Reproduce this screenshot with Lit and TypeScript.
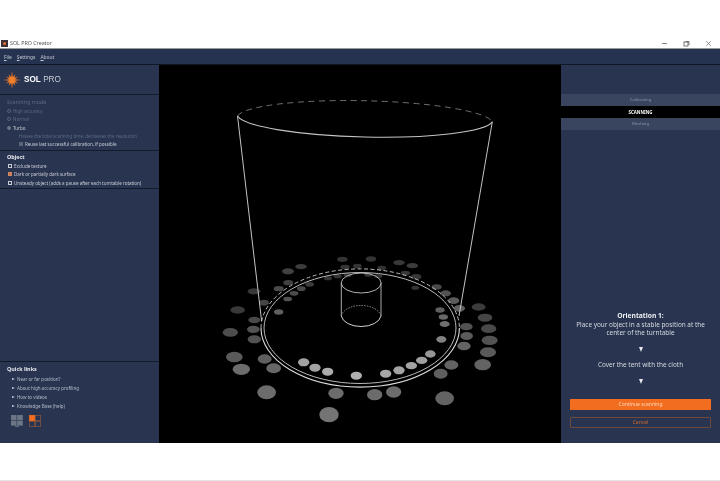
import { LitElement, html, css, svg } from "lit";
import { customElement } from "lit/decorators.js";

type Dot = [number, number, number, number, number];
const dots: Dot[] = [
  [397,28,16,8,60],[483,27,16,8,60],[567,38,17,8,65],[607,47,17,8,70],[405,51,14,7,60],[442,48,13,7,60],[515,54,13,7,60],
  [586,69,14,7,65],[619,80,15,8,65],[273,50,17,8,70],[234,64,18,9,75],[235,98,15,8,75],[299,103,13,7,70],[354,85,12,6,60],
  [383,79,12,6,60],[413,75,12,6,60],[475,74,12,6,60],[505,78,12,6,60],[206,116,15,8,85],[274,116,13,7,85],[252,130,13,7,90],
  [233,147,13,7,95],[132,124,19,9,65],[162,158,15,9,80],[83,180,22,11,65],[206,186,14,8,110],[133,210,18,10,85],[130,238,19,11,95],
  [61,247,23,13,90],[133,268,20,12,95],[73,321,25,16,105],[164,327,21,14,110],[94,358,26,17,125],[191,355,22,15,120],
  [281,337,17,12,190],[315,353,17,12,190],[353,365,17,12,200],[439,377,17,12,205],[527,371,17,12,195],[567,361,17,12,190],
  [604,347,17,11,190],[635,331,17,11,185],[661,312,16,11,175],[694,268,15,10,150],[704,222,15,9,130],[700,201,14,8,120],
  [690,180,14,8,110],[616,113,12,6,60],[680,111,15,8,85],[707,130,16,9,95],[731,152,17,10,105],[748,175,17,10,110],
  [806,171,21,11,70],[825,203,22,12,80],[836,236,23,13,85],[839,271,24,14,95],[834,307,24,15,105],[818,344,25,17,115],
  [769,230,19,11,95],[770,258,19,12,105],[762,288,20,13,115],[724,345,21,14,115],[692,371,21,15,110],
  [170,427,28,21,125],[378,430,23,17,125],[494,434,23,17,125],[551,426,23,17,125],[704,445,28,21,115],[357,494,29,23,135],
];

const scene = svg`
  ${dots.map(([x, y, rx, ry, g]) => {
    const v = Math.round(g * 0.86);
    return svg`<ellipse cx=${210 + x / 3} cy=${250 + y / 3} rx=${rx / 3} ry=${ry / 3} fill=${`rgb(${v},${v},${v})`}></ellipse>`;
  })}
  <g fill="none" stroke="#c4c4c4" stroke-width="1">
    <path d="M237.5 116 L261.6 321"/>
    <path d="M492.3 121.7 L459 316"/>
    <path d="M237.5 116 A128 20 1.3 0 0 492.3 121.7" stroke-width="1.1"/>
    <path d="M237.5 116 A128 20 1.3 0 1 492.3 121.7" stroke="#8c8c8c" stroke-width=".8" stroke-dasharray="6 4.5"/>
    <path d="M261 328 A99 59 0 0 0 459.4 328" stroke="#dcdcdc" stroke-width="1.1"/>
    <path d="M261 328 A99 59 0 0 1 459.4 328" stroke="#cfcfcf" stroke-width=".9" stroke-dasharray="4 2.5"/>
    <ellipse cx="360" cy="328" rx="96" ry="55.5" stroke="#b8b8b8" stroke-width="1"/>
    <path d="M341.3 283 L341.3 316 M381 283 L381 316" stroke="#bdbdbd" stroke-width=".9"/>
    <ellipse cx="361.2" cy="283" rx="20" ry="10" stroke="#c4c4c4" stroke-width=".9"/>
    <path d="M341.3 316 A20 12 0 0 0 381 316" stroke="#d0d0d0" stroke-width="1"/>
    <path d="M341.3 316 A20 12 0 0 1 381 316" stroke="#b0b0b0" stroke-width=".8" stroke-dasharray="1.5 1.2"/>
  </g>
`;

function starPoints(): string {
  const pts: string[] = [];
  const n = 12;
  for (let i = 0; i < n * 2; i++) {
    const a = (i * Math.PI) / n;
    let r = 3.1;
    if (i % 2 === 0) {
      const k = i / 2;
      r = k % 3 === 0 ? 9 : 7;
    }
    pts.push(`${(r * Math.cos(a)).toFixed(2)},${(r * Math.sin(a)).toFixed(2)}`);
  }
  return pts.join(" ");
}

@customElement("app-root")
export class AppRoot extends LitElement {
  static styles = css`
    :host {
      display: block;
      width: 720px;
      height: 481px;
      background: #fff;
      font-family: "Noto Sans", "Open Sans", sans-serif;
      overflow: hidden;
      filter: blur(0.3px);
    }
    .window { display: flex; flex-direction: column; height: 443px; padding-top: 38px; box-sizing: border-box; }
    .bottom { height: 38px; border-bottom: 1px solid #e4e4e4; box-sizing: border-box; }
    .title {
      height: 10px; display: flex; align-items: center; padding-left: 1px;
      font-size: 5.3px; color: #555; box-sizing: content-box; border-bottom: 1px solid #9a9a9a;
    }
    .app-icon { width: 7px; height: 7px; margin-right: 2px; background: #3a3238; display: flex; align-items: center; justify-content: center; }
    .app-icon i { width: 3px; height: 3px; background: #e8702a; border-radius: 50%; }
    .spacer { flex: 1; }
    .ctl { width: 22px; display: flex; justify-content: center; }
    .ctl.last { margin-right: 1px; }
    .menu {
      height: 15px; background: #253350; border-bottom: 1px solid #101622; display: flex; align-items: center;
      gap: 5px; padding: 0 4px; font-size: 4.9px; color: #c3c8d2;
    }
    .menu u { text-underline-offset: 1px; }
    .main { flex: 1; display: flex; min-height: 0; background: #000; }
    .left { width: 159px; background: #283450; display: flex; flex-direction: column; color: #c8ccd4; font-size: 4.5px; }
    .sec { border-bottom: 1px solid #131a29; box-sizing: border-box; padding-left: 7px; }
    .logo { height: 30px; display: flex; align-items: center; padding-left: 3px; gap: 3px; }
    .word { font-size: 8.2px; color: #fff; font-family: "Liberation Sans", sans-serif; }
    .word b { font-weight: 700; }
    .word span { font-weight: 400; color: #c7ccd6; }
    .mode { height: 56px; padding-top: 3px; display: flex; flex-direction: column; }
    .h-dim { font-size: 5.4px; color: #5d6a83; height: 8px; line-height: 8px; margin-bottom: 1px; }
    .row { display: flex; align-items: center; gap: 2px; height: 8.3px; line-height: 8.3px; white-space: nowrap; }
    .dim { color: #5d6a83; }
    .radio { width: 4px; height: 4px; border-radius: 50%; border: .6px solid #56627c; box-sizing: border-box; }
    .radio.on { background: #6b7484; border-color: #6b7484; }
    .note { padding-left: 12px; color: #5d6a83; }
    .sub { padding-left: 12px; }
    .tick { width: 4px; height: 4px; background: #5a6479; }
    .object { height: 38px; padding-top: 2px; }
    .h { font-size: 5.4px; font-weight: 700; color: #e8eaee; height: 9px; line-height: 9px; }
    .cb { width: 4px; height: 4px; margin-left: 1px; border: .7px solid #c8ccd4; box-sizing: border-box; }
    .cb.on { background: #e0703a; border-color: #c88a6c; }
    .gap { flex: 1; border-bottom: 1px solid #131a29; }
    .links { height: 81px; box-sizing: border-box; padding: 3px 0 0 7px; }
    .link { display: flex; align-items: center; gap: 2px; height: 9px; padding-left: 5px; color: #b6bcc9; white-space: nowrap; }
    .link i { width: 0; height: 0; border-left: 3px solid #d4d7dd; border-top: 1.6px solid transparent; border-bottom: 1.6px solid transparent; }
    .icons { display: flex; gap: 6px; padding: 5px 0 0 4px; }
    .canvas { flex: 1; display: block; min-width: 0; }
    .canvas svg { display: block; width: 402px; height: 378px; }
    .right { width: 159px; background: #283450; display: flex; flex-direction: column; color: #d2d6dd; align-items: stretch; }
    .top-gap { height: 29px; }
    .tab { height: 12px; line-height: 12px; text-align: center; font-size: 4.2px; color: #8a94a8; background: #39445e; }
    .tab.on { background: #000; color: #fff; font-weight: 700; font-size: 4.4px; }
    .msg { text-align: center; font-size: 6.4px; line-height: 8.5px; padding: 0 8px; white-space: nowrap; color: #d6d9df; }
    .msg b { color: #eceef1; font-weight: 700; font-size: 6.7px; }
    .tri { height: 0; width: 0; margin: 5px auto 5px; border-top: 5px solid #e8eaee; border-left: 2.5px solid transparent; border-right: 2.5px solid transparent; }
    .tri.first { margin-top: 9px; }
    .cover { margin: 4.5px 0 4.5px; }
    .btn { margin: 0 9px; height: 11px; line-height: 11px; text-align: center; font-size: 5px; box-sizing: border-box; }
    .primary { background: #f26d1f; color: #ffd9bf; margin-top: 10px; }
    .ghost { border: 1px solid #6e4a3c; color: #d06a30; line-height: 9px; margin-top: 7px; margin-bottom: 15px; border-radius: 1px; }
  `;

  render() {
    return html`
      <div class="window">
        <div class="title">
          <div class="app-icon"><i></i></div>
          <span>SOL PRO Creator</span>
          <div class="spacer"></div>
          <div class="ctl"><svg width="7" height="7"><path d="M1 3.5H6" stroke="#666" stroke-width=".8"/></svg></div>
          <div class="ctl"><svg width="7" height="7" fill="none" stroke="#555" stroke-width=".8"><rect x="1" y="2" width="4" height="4"/><path d="M2.5 1.6H6V5"/></svg></div>
          <div class="ctl last"><svg width="7" height="7"><path d="M1.2 1.2 5.8 5.8M5.8 1.2 1.2 5.8" stroke="#666" stroke-width=".7"/></svg></div>
        </div>
        <div class="menu"><span><u>F</u>ile</span><span><u>S</u>ettings</span><span><u>A</u>bout</span></div>
        <div class="main">
          <aside class="left">
            <div class="sec logo">
              <svg width="18" height="18" viewBox="-9 -9 18 18">
                <polygon points=${starPoints()} fill="#f07a28"></polygon>
                <circle r="3.2" fill="#f5812c"></circle>
              </svg>
              <div class="word"><b>SOL</b> <span>PRO</span></div>
            </div>
            <div class="sec mode">
              <div class="h-dim">Scanning mode</div>
              <div class="row dim"><span class="radio"></span>High accuracy</div>
              <div class="row dim"><span class="radio"></span>Normal</div>
              <div class="row"><span class="radio on"></span>Turbo</div>
              <div class="row note">Halves the total scanning time, decreases the resolution</div>
              <div class="row sub"><span class="tick"></span>Reuse last successful calibration, if possible</div>
            </div>
            <div class="sec object">
              <div class="h">Object</div>
              <div class="row"><span class="cb"></span>Exclude texture</div>
              <div class="row"><span class="cb on"></span>Dark or partially dark surface</div>
              <div class="row"><span class="cb"></span>Unsteady object (adds a pause after each turntable rotation)</div>
            </div>
            <div class="gap"></div>
            <div class="links">
              <div class="h">Quick links</div>
              <div class="link"><i></i>Near or far position?</div>
              <div class="link"><i></i>About high accuracy profiling</div>
              <div class="link"><i></i>How to videos</div>
              <div class="link"><i></i>Knowledge Base (help)</div>
              <div class="icons">
                <svg width="12" height="12" viewBox="0 0 12 12"><rect x="0" y="0" width="5.6" height="5" fill="#6c7585"/><rect x="6.2" y="0" width="5.6" height="5" fill="#6c7585"/><rect x="0" y="5.6" width="5.6" height="5" fill="#6c7585"/><rect x="6.2" y="5.6" width="5.6" height="5" fill="#6c7585"/><rect x="4" y="10.6" width="4" height="1.2" fill="#6c7585"/></svg>
                <svg width="12" height="12" viewBox="0 0 12 12" fill="none" stroke="#7d5240" stroke-width=".8"><rect x=".4" y=".4" width="5.2" height="5.2" fill="#f26d1f" stroke="#f26d1f"/><rect x="6.4" y=".4" width="5.2" height="5.2"/><rect x=".4" y="6.4" width="5.2" height="5.2"/><rect x="6.4" y="6.4" width="5.2" height="5.2"/></svg>
              </div>
            </div>
          </aside>
          <main class="canvas">
            <svg viewBox="159 65 402 378">${scene}</svg>
          </main>
          <aside class="right">
            <div class="top-gap"></div>
            <div class="tab">Calibrating</div>
            <div class="tab on">SCANNING</div>
            <div class="tab">Meshing</div>
            <div class="spacer"></div>
            <div class="msg"><b>Orientation 1:</b><br>Place your object in a stable position at the<br>center of the turntable</div>
            <div class="tri first"></div>
            <div class="msg cover">Cover the tent with the cloth</div>
            <div class="tri"></div>
            <div class="btn primary">Continue scanning</div>
            <div class="btn ghost">Cancel</div>
          </aside>
        </div>
      </div>
      <div class="bottom"></div>
    `;
  }
}
